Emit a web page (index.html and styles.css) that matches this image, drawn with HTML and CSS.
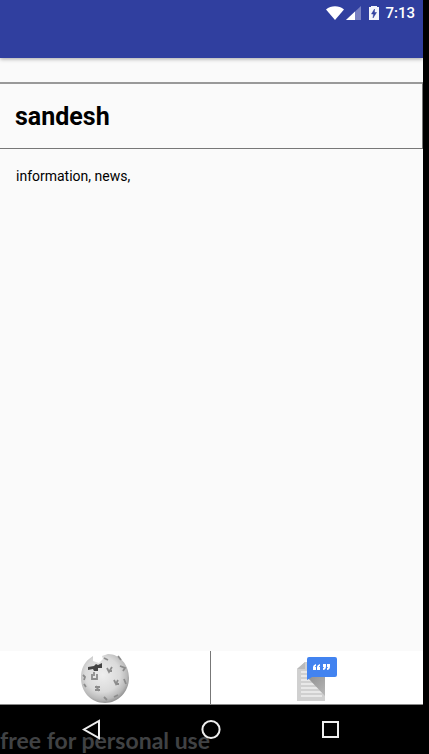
FILE: index.html
```html
<!DOCTYPE html>
<html lang="en">
<head>
<meta charset="utf-8">
<meta name="viewport" content="width=device-width, initial-scale=1">
<title>sandesh</title>
<link rel="stylesheet" href="styles.css">
</head>
<body>
<div class="screen">
  <header class="app-bar">
    <div class="status">
      <svg class="wifi" width="18" height="14" viewBox="0 0 18 14" aria-hidden="true"><path d="M0 3.4C5 -.7 13 -.7 18 3.4L9 14Z" fill="#fff"/></svg>
      <svg class="signal" width="15" height="14" viewBox="0 0 15 14" aria-hidden="true"><path d="M15 0V14H0Z" fill="#7880c2"/><path d="M9 5.6V14H0Z" fill="#fff"/></svg>
      <svg class="battery" width="10" height="15" viewBox="0 0 10 15" aria-hidden="true"><path d="M2 0H8V1H10V14H0V1H2Z" fill="#f4f4fa"/><path d="M5.5 3L2.5 8H4.5L4 12L7.5 6.5H5.5Z" fill="#303f9f" stroke="#303f9f" stroke-width=".5"/></svg>
      <time class="clock">7:13</time>
    </div>
  </header>
  <main class="content">
    <h1 class="title">sandesh</h1>
    <p class="meaning">information, news,</p>
  </main>
  <div class="sources">
    <button class="source" aria-label="Wikipedia">
      <svg width="50" height="50" viewBox="0 0 50 50" aria-hidden="true">
        <defs>
          <radialGradient id="globe" cx=".45" cy=".42" r=".6"><stop offset="0" stop-color="#eeeeee"/><stop offset=".6" stop-color="#dadada"/><stop offset=".85" stop-color="#b9b9b9"/><stop offset="1" stop-color="#8c8c8c"/></radialGradient>
          <filter id="soft"><feGaussianBlur stdDeviation=".6"/></filter>
        </defs>
        <g filter="url(#soft)">
          <path d="M9 6L13 3L13 8L19 10L23 6L22 3L28 1C40 1 49 12 49 25C49 39 38 50 25 50C11 50 1 39 1 25C1 16 4 10 9 6Z" fill="url(#globe)"/>
          <path d="M8 14L14 13L16 11L18 12L22 10V15L18 15L18 18H14L13 16L8 17Z" fill="#444"/>
          <g fill="none" stroke="#8c8c8c" stroke-width="1.8">
            <path d="M12 21V26H17V21M14 19V23M27 15L29 19L32 14M28 18H32"/>
            <path d="M15 34H20M15 37H20M16 33L19 38M34 27L36 31L38 27M35 31H39"/>
            <path d="M3 22L5 24L4 27M4 31L6 34M38 3L41 7M40 13L45 15L43 18M44 26L46 31M24 44L27 47M34 44L38 42"/>
            <path d="M24 5L28 7"/>
          </g>
        </g>
      </svg>
    </button>
    <button class="source" aria-label="Quotes and references">
      <svg width="42" height="46" viewBox="-1 -1 42 46" overflow="visible" aria-hidden="true">
        <defs>
          <linearGradient id="fold" x1="0" y1="0" x2="1" y2="1"><stop offset="0" stop-color="#909090"/><stop offset="1" stop-color="#b8b8b8"/></linearGradient>
          <filter id="edge"><feGaussianBlur stdDeviation=".6"/></filter>
        </defs>
        <g filter="url(#edge)">
          <path d="M1 13L9 6H29V45H1Z" fill="#d0d0d0"/>
          <path d="M1 13L9 6V13Z" fill="#bbb"/>
          <path d="M5 16H23M5 20H23M5 24H23M5 28H25M5 32H26M5 36H26M5 40H26" stroke="#f0f0f0" stroke-width="1.6"/>
          <path d="M11 21H29V40Z" fill="url(#fold)"/>
          <path d="M13 1H39Q41 1 41 3V19Q41 21 39 21H16L11 24V3Q11 1 13 1Z" fill="#4283f0"/>
        </g>
        <path d="M20 8Q17 9 17 11V14H20V11H19Q19 10 20 10ZM24 8Q21 9 21 11V14H24V11H23Q23 10 24 10ZM27 8H30V10Q30 14 27 14V12Q28 12 28 11H27ZM31 8H34V10Q34 14 31 14V12Q32 12 32 11H31Z" fill="#fff"/>
      </svg>
    </button>
  </div>
  <nav class="nav-bar">
    <span class="watermark">free for personal use</span>
    <button class="nav-button" aria-label="Back"><svg width="20" height="22" viewBox="0 0 20 22" aria-hidden="true"><path d="M18 2V19L3 10.500Z"/></svg></button>
    <button class="nav-button" aria-label="Home"><svg width="20" height="22" viewBox="0 0 20 22" aria-hidden="true"><circle cx="10" cy="10.500" r="8.600"/></svg></button>
    <button class="nav-button" aria-label="Recent apps"><svg width="20" height="22" viewBox="0 0 20 22" aria-hidden="true"><path d="M2 3H17V18H2Z"/></svg></button>
  </nav>
</div>
</body>
</html>
```
FILE: styles.css
```css
* {
  box-sizing: border-box;
}

body {
  margin: 0;
  padding-right: 6px;
  background: #000;
  font-family: Roboto, "Liberation Sans", sans-serif;
  color: #000;
}

button {
  display: flex;
  align-items: center;
  justify-content: center;
  margin: 0;
  padding: 0;
  border: 0;
  background: none;
}

.screen {
  display: flex;
  flex-direction: column;
  min-height: 100vh;
  background: #fafafa;
}

.app-bar {
  height: 58px;
  background: #303f9f;
  box-shadow: 0 1px 4px rgba(0, 0, 0, 0.35);
  clip-path: inset(0 0 -8px 0);
}

.status {
  display: flex;
  align-items: center;
  justify-content: flex-end;
  height: 26px;
  padding-right: 8px;
}

.signal {
  margin: 0 8px 0 2px;
}

.clock {
  margin-left: 6px;
  color: #fff;
  font-size: 15px;
  font-weight: 500;
  line-height: 26px;
}

.content {
  flex: 1;
  padding-top: 24px;
}

.title {
  margin: 0;
  padding: 17px 15px 15px;
  border: 1px solid #777;
  border-top: 2px solid #999;
  border-left: 0;
  font-size: 25px;
  font-weight: 700;
  line-height: 32px;
}

.meaning {
  margin: 0;
  padding: 16px;
  font-size: 14px;
  line-height: 22px;
}

.sources {
  display: flex;
  height: 54px;
  padding-right: 2px;
  border-bottom: 1px solid #888;
  background: #fff;
}

.source {
  flex: 1;
}

.source + .source {
  border-left: 1px solid #777;
}

.nav-bar {
  position: relative;
  display: flex;
  justify-content: center;
  height: 49px;
  padding-right: 2px;
  background: #000;
}

.nav-button {
  position: relative;
  width: 120px;
}

.nav-button svg {
  fill: none;
  stroke: #eee;
  stroke-width: 2;
}

.watermark {
  position: absolute;
  bottom: 0;
  left: 0;
  color: #404244;
  font-family: Lato, sans-serif;
  font-size: 23px;
  font-weight: 700;
  line-height: 28px;
  white-space: nowrap;
}
```
